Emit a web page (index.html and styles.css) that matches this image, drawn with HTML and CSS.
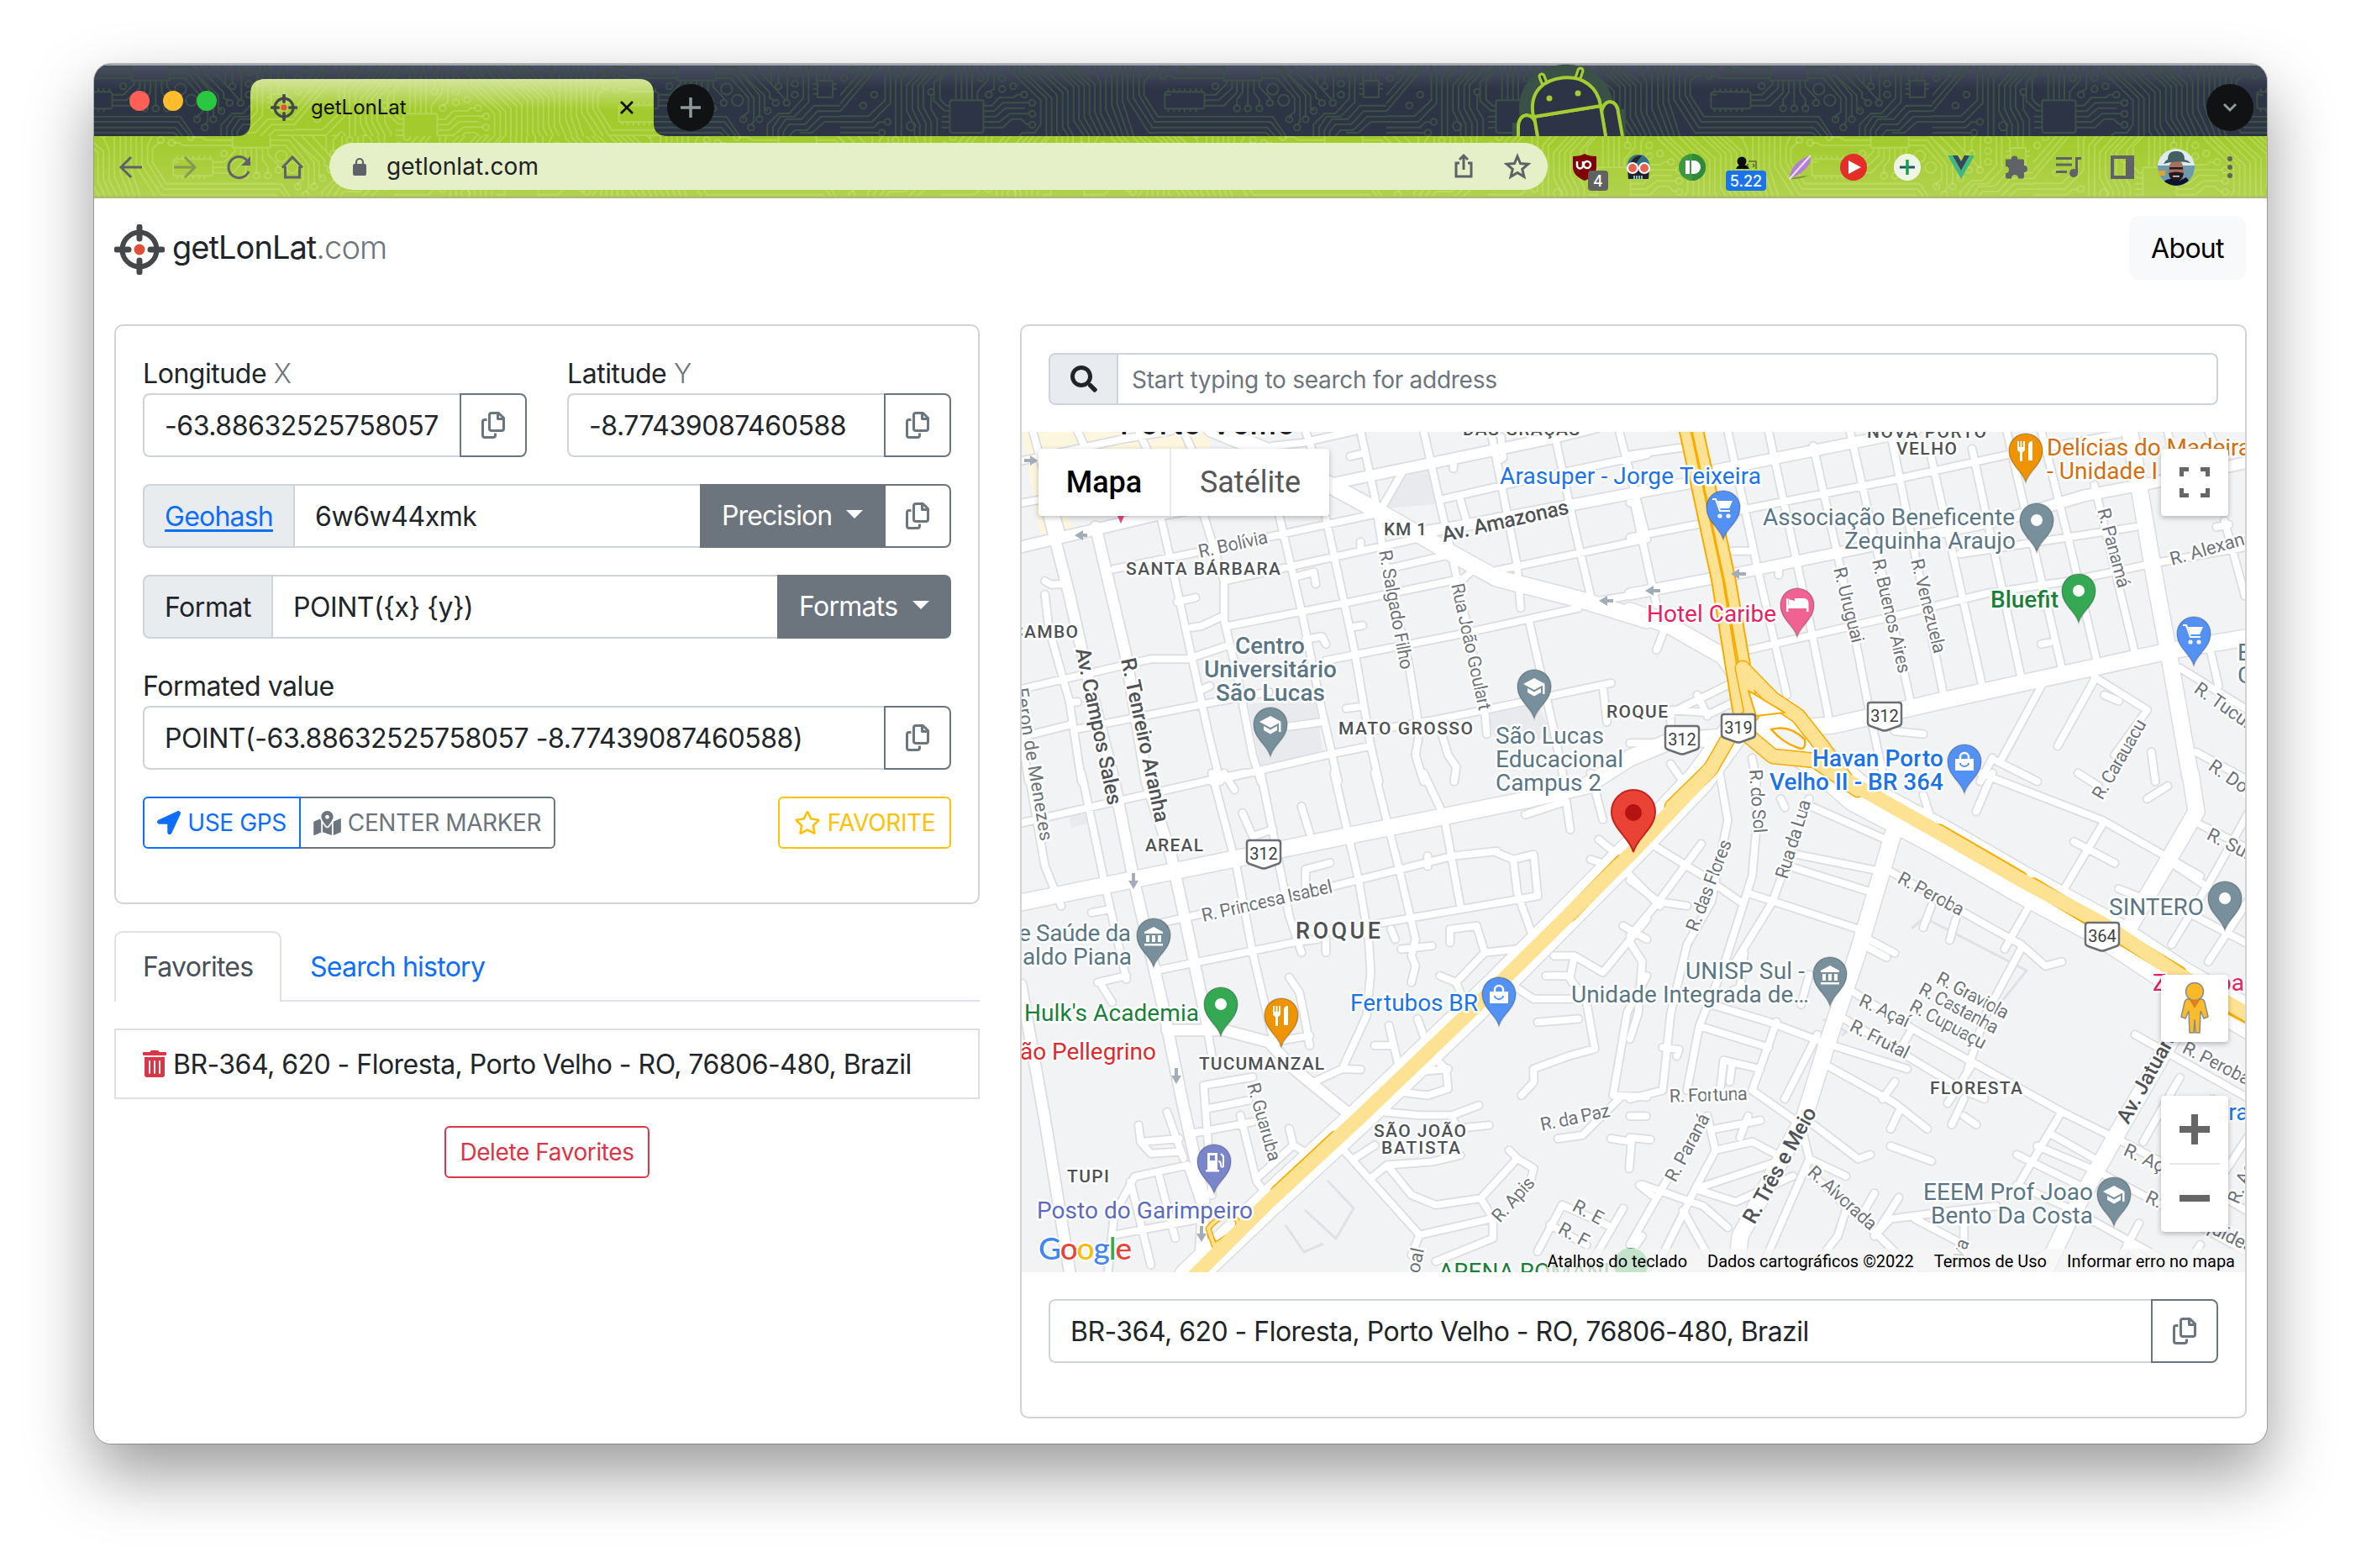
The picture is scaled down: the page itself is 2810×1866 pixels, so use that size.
FILE: index.html
```html
<!DOCTYPE html>
<html lang="en">
<head>
<meta charset="utf-8">
<title>getLonLat</title>
<link rel="stylesheet" href="styles.css">
</head>
<body>
<svg class="sprite" aria-hidden="true">
  <defs>
    <symbol id="i-copy" viewBox="0 0 28 32"><g fill="none" stroke="currentColor" stroke-width="3" stroke-linejoin="round"><path d="M12 1.500h8.500l6 6V20a2.500 2.500 0 0 1-2.500 2.500H12A2.500 2.500 0 0 1 9.500 20V4A2.500 2.500 0 0 1 12 1.500z"/><path d="M19.500 2v6.500h7M6.500 9.500H4A2.500 2.500 0 0 0 1.500 12v16A2.500 2.500 0 0 0 4 30.500h10a2.500 2.500 0 0 0 2.500-2.500v-2.500"/></g></symbol>
    <symbol id="i-target" viewBox="0 0 60 60"><circle cx="30" cy="30" r="20.500" fill="none" stroke="#45484a" stroke-width="6"/><path d="M30 3v14M30 43v14M3 30h14M43 30h14" stroke="#45484a" stroke-width="7" stroke-linecap="round"/><circle cx="30" cy="30" r="6.500" fill="#e04f3a"/></symbol>
    <symbol id="i-search" viewBox="0 0 512 512"><path fill="currentColor" d="M505 442.700L405.300 343c-4.500-4.500-10.600-7-17-7H372c27.600-35.300 44-79.700 44-128C416 93.100 322.900 0 208 0S0 93.100 0 208s93.100 208 208 208c48.300 0 92.700-16.400 128-44v16.300c0 6.400 2.500 12.500 7 17l99.700 99.700c9.400 9.400 24.600 9.400 33.900 0l28.300-28.300c9.400-9.400 9.400-24.600.1-34zM208 336c-70.700 0-128-57.200-128-128 0-70.700 57.200-128 128-128 70.700 0 128 57.200 128 128 0 70.700-57.200 128-128 128z"/></symbol>
    <symbol id="i-arrow" viewBox="0 0 512 512"><path fill="currentColor" d="M444.520 3.520L28.740 195.420c-47.970 22.390-31.980 92.750 19.190 92.750h175.910v175.910c0 51.170 70.360 67.170 92.750 19.190l191.900-415.780c15.990-38.390-25.590-79.970-63.970-63.970z"/></symbol>
    <symbol id="i-map" viewBox="0 0 576 512"><path fill="currentColor" d="M288 0c-69.590 0-126 56.410-126 126 0 56.260 82.350 158.800 113.900 196.020 6.390 7.540 17.820 7.540 24.200 0C331.650 284.800 414 182.260 414 126 414 56.410 357.590 0 288 0zm0 168c-23.200 0-42-18.800-42-42s18.800-42 42-42 42 18.800 42 42-18.800 42-42 42zM20.120 215.950A32.006 32.006 0 0 0 0 245.660v250.320c0 11.320 11.430 19.060 21.940 14.860L160 448V214.920c-8.840-15.980-16.070-31.540-21.250-46.420L20.120 215.950zM288 359.670c-14.070 0-27.380-6.180-36.510-16.960-19.660-23.200-40.570-49.620-59.490-76.720v182l192 64V266c-18.920 27.090-39.820 53.520-59.490 76.720-9.130 10.770-22.440 16.950-36.510 16.950zm266.060-198.510L416 224v288l139.880-55.950A31.996 31.996 0 0 0 576 426.340V176.020c0-11.320-11.430-19.060-21.940-14.860z"/></symbol>
    <symbol id="i-star" viewBox="0 0 576 512"><path fill="currentColor" d="M528.100 171.500L382 150.200 316.700 17.800c-11.700-23.600-45.600-23.900-57.400 0L194 150.200 47.900 171.500c-26.200 3.800-36.700 36.100-17.700 54.600l105.700 103-25 145.500c-4.500 26.300 23.200 46 46.400 33.700L288 439.600l130.700 68.700c23.200 12.200 50.900-7.400 46.400-33.700l-25-145.500 105.700-103c19-18.500 8.500-50.800-17.700-54.600zM388.600 312.300l23.700 138.400L288 385.400l-124.300 65.300 23.700-138.400-100.600-98 139-20.200 62.200-126 62.200 126 139 20.200-100.600 98z"/></symbol>
    <symbol id="i-trash" viewBox="0 0 448 512"><path fill="currentColor" d="M32 464a48 48 0 0 0 48 48h288a48 48 0 0 0 48-48V128H32zm272-256a16 16 0 0 1 32 0v224a16 16 0 0 1-32 0zm-96 0a16 16 0 0 1 32 0v224a16 16 0 0 1-32 0zm-96 0a16 16 0 0 1 32 0v224a16 16 0 0 1-32 0zM432 32H312l-9.400-18.700A24 24 0 0 0 281.100 0H166.800a23.720 23.720 0 0 0-21.400 13.300L136 32H16A16 16 0 0 0 0 48v32a16 16 0 0 0 16 16h416a16 16 0 0 0 16-16V48a16 16 0 0 0-16-16z"/></symbol>

    <!-- one repeat of the circuit board theme -->
    <g id="circuit" transform="scale(.4209 .3333)">
      <path class="hair" d="M0 130L75 22M0 160L95 22M0 188L110 22M0 205H80L127 148V22M0 225H90L142 158V50L150 22M0 245H95L110 226H125M0 264H108M157 276V70L190 22M173 276V70L208 22M210 276V240L188 185V95L240 22M225 276V235L204 180V95L257 22M242 276V230L220 176V95L272 22M257 276V225L235 172V95L290 22M274 276V215L257 180V128M310 185H295L265 150V85L310 22M310 167H300L282 145V75L320 22M327 145V22M343 145V22M358 145V22M373 145V22M388 145V118L418 75V22M397 60V22M420 118L435 108V60L450 22M405 167H428L450 138H490L500 128H512M405 187H435L460 157H535M405 206H440L467 176H522M405 225H450L480 196H535M405 245H460L485 215H512L528 234H536M310 206H287M310 225H287M310 245H287M505 276L515 264H550L567 234V148L483 45V22M583 276V140L499 40V22M598 276V140L515 40V22M622 276L613 260V130L530 22M645 276L629 245V120L547 22M660 276L644 240V115L562 22M690 276L660 220V100L595 22M705 276L675 215V100L612 22M720 276L690 210V95L627 22M735 276L705 200V95L645 22M750 276L720 190V90L660 22M770 276L736 195V85L720 40M785 276L751 180V22M800 276L768 165V22M815 276L783 160V22M830 276L798 150V22M1215 276L1205 264H873L813 145V22M1230 276L1208 245H883L829 140V22M1250 276L1217 225H890L845 130V70L860 30M1260 276L1223 206H898L859 130V80L880 55M918 128H935M900 22L910 30H930L940 22M918 60H935L945 69H1085M970 40H998L1010 50H1085M1005 22L1015 30H1085M1030 128H1062L1092 90V80M1030 148H1070L1108 105V80M1030 167H1085L1122 120V80M1122 170V145L1138 120V80M1153 170V80M1185 170V145L1170 120V80M1215 150V140L1185 100V80M1192 69H1235L1285 140V190L1270 205V215M1192 50H1245L1300 140V225L1292 235M1192 30H1250L1316 130V210M1240 22L1330 130V176L1340 186M1270 22L1345 120V140L1362 150M1300 22L1378 130L1392 150M1335 22L1350 40V90M1370 90V50L1378 40V22M1395 22V148M1440 22V140L1400 195H1370L1338 235V276M1455 22V155L1415 206H1375L1354 245V276M1544 167H1470L1435 215H1390L1369 255V276M1544 187H1480L1445 234H1400L1384 260V276M1544 206H1490L1450 255H1415L1400 276M1544 225H1500L1465 264H1430M1500 80V50L1490 22M1515 80V22M1478 90V50L1465 22M310 148H400Q405 148 405 155V256Q405 264 398 264H318Q310 264 310 256V155Q310 148 318 148M1085 22V77H1192V22M925 118H1022Q1030 118 1030 126V170Q1030 178 1022 178H925Q918 178 918 170V126Q918 118 925 118M928 118V106M944 118V106M959 118V106M974 118V106M990 118V106M1006 118V106M1022 118V106M928 178V190M944 178V190M959 178V190M974 178V190M990 178V190M1006 178V190M1480 78H1523V137H1480ZM1480 90H1467M1480 107H1467M1480 125H1467M1523 90H1535M1523 107H1535"/>
      <g><ellipse class="hair" cx="11" cy="69" rx="9" ry="11"/><ellipse class="hair" cx="34" cy="40" rx="9" ry="11"/><ellipse class="hair" cx="96" cy="128" rx="9" ry="11"/><ellipse class="hair" cx="65" cy="167" rx="9" ry="11"/><ellipse class="hair" cx="134" cy="225" rx="9" ry="11"/><ellipse class="hair" cx="118" cy="264" rx="9" ry="11"/><ellipse class="hair" cx="200" cy="240" rx="12" ry="16"/><ellipse class="hair" cx="257" cy="118" rx="9" ry="11"/><ellipse class="hair" cx="397" cy="69" rx="9" ry="11"/><ellipse class="hair" cx="420" cy="128" rx="9" ry="11"/><ellipse class="hair" cx="458" cy="69" rx="9" ry="11"/><ellipse class="hair" cx="458" cy="108" rx="9" ry="11"/><ellipse class="hair" cx="489" cy="98" rx="9" ry="11"/><ellipse class="hair" cx="520" cy="128" rx="9" ry="11"/><ellipse class="hair" cx="543" cy="157" rx="9" ry="11"/><ellipse class="hair" cx="543" cy="196" rx="9" ry="11"/><ellipse class="hair" cx="543" cy="235" rx="9" ry="11"/><ellipse class="hair" cx="720" cy="30" rx="9" ry="11"/><ellipse class="hair" cx="882" cy="50" rx="9" ry="11"/><ellipse class="hair" cx="913" cy="60" rx="9" ry="11"/><ellipse class="hair" cx="967" cy="40" rx="9" ry="11"/><ellipse class="hair" cx="1061" cy="98" rx="9" ry="11"/><ellipse class="hair" cx="1122" cy="177" rx="9" ry="11"/><ellipse class="hair" cx="1153" cy="177" rx="9" ry="11"/><ellipse class="hair" cx="1185" cy="177" rx="9" ry="11"/><ellipse class="hair" cx="1215" cy="157" rx="9" ry="11"/><ellipse class="hair" cx="1223" cy="108" rx="16" ry="20"/><ellipse class="hair" cx="1254" cy="148" rx="16" ry="20"/><ellipse class="hair" cx="1270" cy="216" rx="9" ry="11"/><ellipse class="hair" cx="1292" cy="245" rx="9" ry="11"/><ellipse class="hair" cx="1316" cy="216" rx="9" ry="11"/><ellipse class="hair" cx="1339" cy="186" rx="9" ry="11"/><ellipse class="hair" cx="1362" cy="157" rx="9" ry="11"/><ellipse class="hair" cx="1393" cy="157" rx="9" ry="11"/><ellipse class="hair" cx="1370" cy="98" rx="9" ry="11"/><ellipse class="hair" cx="1416" cy="50" rx="9" ry="11"/><ellipse class="hair" cx="1416" cy="89" rx="9" ry="11"/><ellipse class="hair" cx="1416" cy="128" rx="9" ry="11"/></g>
    </g>

    <!-- map pins: the tip is at 0,0 -->
    <g id="pin"><path d="M0 0C-4-14-20-21-20-38A20 20 0 0 1 20-38C20-21 4-14 0 0z" stroke="rgba(0,0,0,.22)" stroke-width="1.500"/></g>
    <g id="g-dot"><circle cy="-38" r="7" fill="#fff"/></g>
    <g id="g-cart" fill="none" stroke="#fff" stroke-width="2.200"><path d="M-13-48h4l5 14h12"/><path d="M-7-46h18l-4 9h-11z" fill="#fff" stroke="none"/><circle cx="-4" cy="-28" r="1.500"/><circle cx="6" cy="-28" r="1.500"/></g>
    <g id="g-bag"><path d="M-11-41h22v14h-22z" fill="#fff"/><path d="M-5-40v-3a5 5 0 0 1 10 0v3" fill="none" stroke="#fff" stroke-width="2.500"/><path d="M-5-36a5 4 0 0 0 10 0" fill="none" stroke="#5491f5" stroke-width="2"/></g>
    <g id="g-school" fill="#fff"><path d="M-13-41l13-7 13 7-13 7z"/><path d="M-8-36l8 4.500 8-4.500v5l-8 4.500-8-4.500zM10-40h2.500v11H10z"/></g>
    <g id="g-bank" fill="#fff"><path d="M-11-42l11-6 11 6v2h-22zM-9-38h4v8h-4zM-2-38h4v8h-4zM5-38h4v8h-4zM-11-28h22v2.500h-22z"/></g>
    <g id="g-food" fill="#fff"><path d="M-10-49h2v7h1.500v-7h2v7H-3v-7h2v9q0 3-3 4v11h-3v-11q-3-1-3-4zM3-26v-18q0-5 5-5v23H5v-9H6v9z"/></g>
    <g id="g-bed" fill="#fff"><path d="M-13-46h2.500v11H11v-4q0-5-5-5h-8v7h-9v3h22v4h2.500V-40q0-6-6-6H-3v8h-8v-8zM-13-46v16h2.500v-4H11v-4z"/><circle cx="-7" cy="-41" r="3"/></g>
    <g id="g-fuel"><path d="M-8-48h12v20h2v2.500h-16V-28h2z" fill="#fff"/><path d="M-5-45h6v6h-6z" fill="#7986cb"/><path d="M5-38q3 0 3 4t3 2v-12l-3-3" fill="none" stroke="#fff" stroke-width="2"/></g>
    <path id="shield" d="M-17-16h34q3 0 3 3V8q0 3-3 4L3 17q-3 1-6 0L-17 12q-3-1-3-4V-13q0-3 3-3z" fill="#fff" stroke="#6b6f73" stroke-width="2.500"/>

    <!-- streets, one group per map quarter -->
    <g id="minor">
      <g transform="translate(1200 370) scale(.4847 .3571)"><path class="hair" d="M60 400L100 600 130 740M170 400L190 460M320 400L340 460M430 400L450 460M375 690L410 900 450 1150 490 1400 520 1568M480 680L530 900V1030L560 1200 600 1480 620 1568M665 680L720 1000 770 1330 810 1568M730 400L745 460M780 690L850 1130 890 1450 910 1568M865 400L900 620 920 800 985 1190 1010 1400 1000 1480 1020 1568M1020 400L1070 700 1095 850 1170 1330 1175 1410M1060 1390L1080 1480 1100 1520 1095 1568M1185 400L1250 850 1258 990M1340 400L1390 720 1430 950M1500 400L1568 760M1280 1040L1340 1400 1365 1568M1460 1250L1470 1370M32 500L270 430 400 400M32 640L75 630M260 860L480 800 890 680M530 900L800 820 1000 760M540 1050L840 970 1120 890 1140 865M930 860L1090 810M440 1160L540 1115M32 1260L350 1160H440M780 1165L1100 1080 1400 990M165 1395L480 1310 640 1270M32 1420L150 1380M500 1568L780 1480 890 1450M690 1385L770 1370M890 1400L1060 1360 1170 1330 1480 1240M650 450L720 440 850 400M1060 630L1220 580 1390 530 1568 480M1200 865L1568 760M830 1325L870 1318M840 1055L870 1048M730 1095L770 1085 780 1110M450 1055L475 1050 530 1015M415 970L460 955M90 900L105 912 135 910M90 945L100 1060 150 1300 180 1568M150 1305L170 1303M470 1265L495 1250M840 485L870 475M1093 490V525M1210 420L1215 490 1200 500M975 520L920 650M865 770V800M710 885L750 870 755 910M1110 630L1125 700M20 1300L50 1568M1568 940L1430 970"/></g>
      <g transform="translate(1940 370) scale(.4847 .3571)"><path class="hair" d="M240 400L320 900 385 1280M340 400L440 1030 490 1370M450 450L540 1000 590 1350 625 1568M540 400L640 1000 690 1310M640 410L770 1280M740 490L865 1250M840 460L960 1220M925 400L1060 1190M1010 400L1080 780 1145 1160M1140 580L1240 1140M1320 400L1350 600M1420 400L1450 500M1460 700L1510 950M1425 1130L1445 1250M0 640H10L65 980M0 480L130 455M0 755L190 705M250 670L640 565 925 480 1200 410M250 800H300M290 1130L640 1020 880 940 1080 900 1290 840 1540 780M810 810L1000 770 1240 720M100 1400V1340L250 1240M100 1330L200 1340 260 1300M165 1280L190 1350M85 1060L65 1130M1010 1250L910 1500M1140 1230L1050 1450M1140 1220L1270 1330 1190 1480M1350 1190L1540 1350M1390 1470L1540 1580M890 1490L860 1568M900 1500L1000 1568M650 1400L720 1410M1010 1110L1030 1105M1440 720L1470 712M1280 1470L1290 1568M1165 1280L1200 1300M300 1490L310 1568M0 1440L60 1440M365 860V880M100 1510L130 1568"/></g>
      <g transform="translate(1200 920) scale(.4847 .3954)"><path class="hair" d="M180 0L240 350 290 620M500 0L560 280 600 540 650 800M50 0L90 280 130 400M530 0L555 50M620 0L650 180 690 430 720 540M800 0L860 320 885 500 890 600 880 730 820 890M900 0L960 290 1000 500M1020 0L1070 130 1110 400M490 780L500 850M720 100L740 180M575 120L600 190 650 170M730 340V290L790 270M32 150L500 20 580 0M380 450L470 425M800 340L1090 250 1200 235M1200 240L1240 260 1290 245 1300 370 900 455M360 595L700 510 760 500M780 500V540M1240 260L1250 360 1290 500M1085 510V470L1150 460 1170 540 1250 530M1170 540L1100 630 1060 610M1100 630L1120 690M1000 500L990 550 1000 580 990 630M965 530L1040 520M690 615L715 660 730 750 740 820M650 810L740 790M820 890L750 930M820 890L865 892M220 630L290 610M230 640L255 690M205 420L250 410M320 1060L325 1110 420 1100M325 1110L350 1145 420 1140M390 1020L430 1160M480 940L600 915M480 940L500 1270M490 1010L590 985M450 1085L600 1050M570 1030L610 1230 630 1260M690 1070L700 1120 610 1220M700 1120L740 1150M440 1180L310 1215 260 1330 245 1500M300 1230L350 1480M260 1390L480 1340M370 1210L410 1400M440 1180L470 1290M820 1130L1010 1390 990 1450M1010 1390L1190 1340 1160 1280M930 1180L990 1270 1050 1300 1160 1280 1250 1160 1290 1190 1280 1240M890 1220L930 1180 1040 1170 1110 1150M850 1160L900 1120M1250 1160L1230 1135M1190 1340V1400L1050 1470M920 1020L1010 1030H1090L1155 1000M1090 1030L1100 1070 1180 1060M960 960L1030 970 1080 950 1075 890 1040 850M1080 890L1000 900M900 820H940M935 760L960 890M1005 740L1020 790M1240 640L1290 680H1400M1300 750L1400 740M1320 610H1380L1390 550H1340M1390 550L1460 600 1568 440M1380 620L1420 690 1440 830 1380 850 1290 890V930L1260 970M1510 460L1568 500M1568 610L1520 720 1485 970 1568 975M1500 980L1410 1090 1350 1100M1480 1100L1530 1110 1525 1190M1300 1440L1360 1300 1470 1360M1330 1360L1420 1420M1510 1310L1420 1500M1270 125L1370 85 1380 170M1450 200L1490 240M1430 260L1480 280M1030 250V280M940 470L950 500M1520 300L1600 400M1550 1240L1580 1270M1430 0L1460 140"/></g>
      <g transform="translate(1940 920) scale(.4847 .5102)"><path class="hair" d="M220 0L240 110 200 300 140 400 100 560 80 740 0 760M310 0V130L300 240 230 450 170 590 140 740M440 60L350 300 240 470M60 170L180 240 270 300M0 250L70 300 140 310M70 300L0 380M0 395L30 440 20 560 0 620M70 300L175 165M450 80L640 160M410 190L620 230M400 220L600 280M290 280L580 370M370 60L380 80M720 50L740 110M850 90L890 0M570 380L650 420M570 400L630 430M200 540L340 580 480 630 680 690M170 590L340 640M360 580L300 740M460 610L380 760M230 670L320 690M220 750L230 670M250 680L245 720M300 740L420 820 440 900 530 940M530 500L700 600 1060 790 1210 860 1330 920 1568 1050M520 570L680 660 820 740 870 760M690 600L660 650M480 680L650 770 730 830M650 720L620 760M660 790L640 830M640 870L740 905M840 680L780 770M820 760L790 820M820 800L850 820M450 820L560 900 590 890M640 230L960 400 1020 450 1060 440M740 310L720 360M800 340L785 390M980 310L920 410M960 410L870 570 830 690M860 0L1160 110 1400 240M1160 120L1060 280M1090 160L1190 210M1400 120L1568 200M1330 210L1440 280M1380 330L1540 410M1520 90L1420 260 1330 400M1530 280L1420 440M1240 610L1540 770M1060 790L960 950M1030 840L1160 910M950 890L1100 960M1000 870L1150 930 1290 1000 1540 1130M950 960L1090 1020 1300 1130M1350 710L1260 860M1430 760L1340 900M1530 830L1440 960M600 1080L640 1040 800 1020 900 1010M440 930L600 1070 700 1163M600 980L570 1030M660 990L600 1080M530 1020L510 1080 460 1140M700 1040L820 1100M190 800L210 880 160 970 60 1163M210 880L300 860 360 890M160 970L350 910M160 970L260 1000 400 940M30 960L180 1010 240 1060M90 950L0 1100M130 1020L200 1140M440 900L330 1140M210 830L320 810M290 800L270 850M0 800H40M0 850L50 855M80 640L120 645 115 660M280 420L270 500 200 530M440 470L420 540M1250 1050L1210 1120M820 1020V1120M940 1163L1060 1100M1220 1100L1300 1163M1360 1163L1400 1100M30 1080L-30 1163M1200 270L1280 300M1150 30L1100 0M1270 60L1320 30"/></g>
    </g>
    <g id="medium">
      <path class="hair" d="M1215 651L1380 612 1588 575 1714 549 1840 523 1900 508M1685 634L1733 627 1960 584 2010 575 2035 561 2250 518 2280 511M1215 1172L1244 1335 1273 1513M1940 707L2045 687 2250 645 2390 617 2480 590 2560 575 2680 549M1389 1226H1457L1510 1240 1540 1272 1607 1327"/>
      <path class="hair" d="M1248 612L1273 709 1297 816 1326 930 1350 1050 1384 1197 1408 1315 1433 1426 1428 1513M1304 627L1340 780 1365 930 1394 1019 1413 1106 1437 1220"/>
    </g>
    <g id="major">
      <path class="hair" d="M1442 510L1510 538 1636 606 1685 634 1723 656 1781 688 1879 713 1960 738M1940 727L1988 745 2051 781 2071 809"/>
      <path class="hair" d="M1215 1074L1602 995 1816 952 1888 935 1940 902 1988 882 2052 877M2110 868L2182 863 2342 827 2585 774 2690 756M2534 510L2565 691 2585 799 2607 925M2607 920L2614 966 2531 1109M2594 1220L2517 1354 2463 1451 2430 1520M2255 986L2211 1134 2173 1247 2148 1328 2071 1471 2066 1520"/>
    </g>
    <path id="br364" d="M2108 866L2165 905 2211 945 2308 996 2405 1052 2502 1104 2594 1165 2690 1221"/>
    <path id="br364w" d="M2060 876L2022 928 1944 1010 1782 1173 1617 1331 1510 1430 1415 1520"/>
  </defs>
</svg>

<main class="window">
  <svg class="theme" viewBox="112 76 2586 160" aria-hidden="true">
    <defs>
      <linearGradient id="strip" x1="0" y1="0" x2="0" y2="1"><stop offset="0" stop-color="#4c5263"/><stop offset=".35" stop-color="#2d3446"/></linearGradient>
      <linearGradient id="bar" gradientUnits="userSpaceOnUse" x1="0" y1="162" x2="0" y2="236"><stop offset="0" stop-color="#a2cb2c"/><stop offset="1" stop-color="#b1d24f"/></linearGradient>
      <linearGradient id="tab" gradientUnits="userSpaceOnUse" x1="0" y1="94" x2="0" y2="130"><stop offset="0" stop-color="#d3e59d"/><stop offset="1" stop-color="#a3cb2e"/></linearGradient>
      <clipPath id="tabclip"><path d="M282 162q16 0 16-16V112q0-18 18-18H760q18 0 18 18v34q0 16 16 16z"/></clipPath>
      <clipPath id="barclip"><path d="M112 162H2698V236H112z"/></clipPath>
      <clipPath id="stripclip"><path d="M112 76H2698V162H112z"/></clipPath>
    </defs>
    <rect x="112" y="76" width="2586" height="86" fill="url(#strip)"/>
    <g clip-path="url(#stripclip)" class="lines-dark">
      <use href="#circuit" transform="translate(-300 70)"/><use href="#circuit" transform="translate(350 70)"/><use href="#circuit" transform="translate(1000 70)"/><use href="#circuit" transform="translate(1650 70)"/><use href="#circuit" transform="translate(2300 70)"/>
    </g>
    <rect x="112" y="76" width="2586" height="2" fill="#a4a7ae"/>
    <g class="droid">
      <path d="M1824 140C1818 108 1838 94 1860 92C1884 90 1902 104 1905 125L1911 162H1830ZM1836 90L1842 104M1880 83L1876 98M1815 162V146M1920 162V130" stroke="#3b5047" stroke-width="30" fill="#3b5047" stroke-linejoin="round"/>
      <path d="M1807 162V150Q1808 138 1817 137 1827 138 1828 150L1830 162M1911 162L1906 134Q1908 122 1916 121 1925 122 1926 134L1931 162" fill="#2d3446" stroke="#a4cd32" stroke-width="4"/>
      <path d="M1835 91L1841 106M1881 84L1876 99" stroke="#a4cd32" stroke-width="9" stroke-linecap="round"/>
      <path d="M1835 91L1841 106M1881 84L1876 99" stroke="#2d3446" stroke-width="2.500" stroke-linecap="round"/>
      <path d="M1830 162L1826 139 1905 126 1911 162" fill="#2d3446" stroke="#a4cd32" stroke-width="4"/>
      <path d="M1825 139C1819 108 1838 95 1860 92.500C1884 90 1902 104 1905 126Z" fill="#2d3446" stroke="#a4cd32" stroke-width="4"/>
      <circle cx="1844" cy="117" r="3.500" fill="#a4cd32"/><circle cx="1878" cy="111" r="3.500" fill="#a4cd32"/>
    </g>
    <rect x="112" y="162" width="2586" height="74" fill="url(#bar)"/>
    <path d="M282 162q16 0 16-16V112q0-18 18-18H760q18 0 18 18v34q0 16 16 16z" fill="url(#tab)"/>
    <g clip-path="url(#tabclip)" class="lines-green"><use href="#circuit" transform="translate(350 86)"/><use href="#circuit" transform="translate(-300 86)"/></g>
    <g clip-path="url(#barclip)" class="lines-green">
      <use href="#circuit" transform="translate(-180 150)"/><use href="#circuit" transform="translate(470 150)"/><use href="#circuit" transform="translate(1120 150)"/><use href="#circuit" transform="translate(1770 150)"/><use href="#circuit" transform="translate(2420 150)"/>
    </g>
    <rect x="112" y="233.500" width="2586" height="2.500" fill="#adbb78"/>
  </svg>

  <div class="tabstrip">
    <span class="light red"></span><span class="light amber"></span><span class="light green"></span>
    <div class="tab"><svg class="fav"><use href="#i-target"/></svg><span class="tab-title">getLonLat</span>
      <svg class="x" viewBox="0 0 18 18"><path d="M2 2l14 14M16 2L2 16" stroke="#111" stroke-width="2.800"/></svg></div>
    <span class="round plus"><svg width="26" height="26" viewBox="0 0 26 26"><path d="M13 1v24M1 13h24" stroke="#8e9a9b" stroke-width="3.500"/></svg></span>
    <span class="round chev"><svg width="18" height="12" viewBox="0 0 18 12"><path d="M2 2l7 7 7-7" fill="none" stroke="#8e9a9b" stroke-width="3"/></svg></span>
  </div>

  <div class="toolbar">
    <svg class="nav" viewBox="0 0 32 32"><path d="M29 16H4M16 4L4 16l12 12"/></svg>
    <svg class="nav dim" viewBox="0 0 32 32"><path d="M3 16h25M16 4l12 12-12 12"/></svg>
    <svg class="nav" viewBox="0 0 32 32"><path d="M28 21A12.500 12.500 0 1 1 26 8"/><path d="M30 3v11H19z" fill="#5f6368" stroke="none"/></svg>
    <svg class="nav" viewBox="0 0 32 32"><path d="M4 16.500L16 4l12 12.500M7.500 15v13h17V15"/></svg>
    <div class="omnibox">
      <svg class="lock" viewBox="0 0 18 22"><path d="M5 9V6a4 4 0 0 1 8 0v3" fill="none" stroke="#5f6368" stroke-width="2.200"/><rect x="1" y="8" width="16" height="14" rx="2" fill="#5f6368"/></svg>
      <span class="url">getlonlat.com</span>
      <svg class="nav share" viewBox="0 0 32 32"><path d="M11 12H7v16h18V12h-4M16 20V4M11 8l5-5 5 5"/></svg>
      <svg class="nav star" viewBox="0 0 32 32"><path d="M16 4l3.500 8.500 9.200.8-7 6 2.200 9L16 23.400l-7.900 4.900 2.200-9-7-6 9.200-.8z"/></svg>
    </div>
    <div class="exts">
      <svg class="ext" viewBox="-32 -37 64 74"><path d="M-14-13Q-5-13 0-16 5-13 14-13V0Q14 10 0 16-14 10-14 0z" fill="#800000"/><path d="M-9-7v5a3.500 3.500 0 0 0 7 0v-5M-2-2v-5M3-7a4 4 0 1 1 0 8 4 4 0 1 1 0-8" fill="none" stroke="#fff" stroke-width="2.500"/><rect x="4" y="4" width="24" height="24" rx="4" fill="#616161"/><text x="16" y="23" class="badge">4</text></svg>
      <svg class="ext" viewBox="-32 -37 64 74"><path d="M-14 2Q-13-15 0-15T14 2z" fill="#336f85"/><path d="M-10-5Q-4-15 4-14L-4-3z" fill="#24232e"/><path d="M-13 2h26l-1 12h-24z" fill="#23222c"/><circle cx="-7" cy="1" r="6" fill="#e8604c" stroke="#fff" stroke-width="2.200"/><circle cx="7" cy="1" r="6" fill="#e8604c" stroke="#fff" stroke-width="2.200"/><path d="M-5 10v4M-2 10v4M1 10v4M4 10v4" stroke="#9fe0ee" stroke-width="1.600"/></svg>
      <svg class="ext" viewBox="-32 -37 64 74"><circle r="16" fill="#3f9840"/><path d="M0-16A16 16 0 0 1 0 16z" fill="#2f8a3a"/><path d="M-8-8h5V8h-5zM-1-8h3a8 8 0 0 1 0 16h-3z" fill="#fff"/></svg>
      <svg class="ext" viewBox="-32 -37 64 74"><circle cx="-5" cy="-7" r="5.500" fill="#0c0c0c"/><path d="M-12 2q2-5 8-5t8 5z" fill="#0c0c0c"/><path d="M3-7h9v9" fill="none" stroke="#5c6b2d" stroke-width="1.500"/><path d="M3-4l-2 2 2 2M8-4l2 2-2 2" fill="none" stroke="#4c5a25" stroke-width="1.200"/><rect x="-24" y="4" width="48" height="24" rx="4" fill="#1a73e8"/><text x="0" y="23" class="badge">5.22</text></svg>
      <svg class="ext" viewBox="-32 -37 64 74"><path d="M-10 13q8-2 20-3-8 4-20 4z" fill="#7c9430"/><path d="M-12 14Q-12 2-2-6T13-14Q14-4 6 3T-12 14" fill="#b57fd6"/><path d="M-12 14Q-2 2 13-14" fill="none" stroke="#efe4fa" stroke-width="2"/></svg>
      <svg class="ext" viewBox="-32 -37 64 74"><circle r="16" fill="#e32f27"/><path d="M-6-8L9 0-6 8z" fill="#fff"/></svg>
      <svg class="ext" viewBox="-32 -37 64 74"><circle r="16" fill="#eef5e6"/><path d="M-9 0H9" stroke="#175b6b" stroke-width="3"/><path d="M0-9V9" stroke="#17a049" stroke-width="3.500"/></svg>
      <svg class="ext" viewBox="-32 -37 64 74"><path d="M-16-14h6L0 4l10-18h6L0 14z" fill="#41b883"/><path d="M-10-14h6L0-7l4-7h6L0 4z" fill="#34495e"/></svg>
      <svg class="ext" viewBox="-32 -37 64 74"><path d="M-11-9.500h6.500a4 4 0 1 1 8 0H9q2 0 2 2V-2a4 4 0 1 1 0 8v5.500q0 2-2 2H4q0-4.500-4-4.500T-4 13.500h-5q-2 0-2-2V7q4 0 4-4t-4-4z" fill="#5f6368"/></svg>
      <svg class="ext" viewBox="-32 -37 64 74"><path d="M-15-10.500H4M-15-3H4M-15 5.500H-2M15-10.500H9.500V7" fill="none" stroke="#5f6368" stroke-width="3"/><circle cx="6" cy="7" r="5" fill="#5f6368"/></svg>
      <svg class="ext" viewBox="-32 -37 64 74"><path d="M-14-14h28v28h-28zM-10-10v20H4v-20z" fill="#5f6368" fill-rule="evenodd"/></svg>
      <svg class="ext" viewBox="-32 -37 64 74"><defs><clipPath id="face"><circle r="22"/></clipPath></defs><g clip-path="url(#face)"><rect x="-22" y="-22" width="44" height="44" fill="#dfeaf0"/><path d="M-22-2h44v24h-44z" fill="#6d9aac"/><path d="M-22 4h9v6h-9z" fill="#d9a92c"/><ellipse cx="0" cy="3" rx="9" ry="12" fill="#a9705f"/><path d="M-9 7Q0 4 9 7 8 16 0 17-8 16-9 7" fill="#251a22"/><path d="M-4 10h8v1.500h-8z" fill="#e6dcd8"/><path d="M-8 0h16v2.500H-8z" fill="#1d1b24"/><path d="M-15-4Q-12-9-10-9-10-20 0-19 10-20 10-9 15-8 17-5 0-9-15-4" fill="#41605f"/><path d="M-18 22Q-14 13-5 14L4 16 12 12 20 22z" fill="#0d1230"/></g></svg>
      <svg class="ext" viewBox="-32 -37 64 74"><g fill="#5f6368"><circle cy="-10" r="3"/><circle r="3"/><circle cy="10" r="3"/></g></svg>
    </div>
  </div>

  <header class="site">
    <a class="brand"><svg class="logo"><use href="#i-target"/></svg><span class="brand-name">getLonLat</span><span class="brand-tld">.com</span></a>
    <a class="about">About</a>
  </header>

  <div class="columns">
    <section class="left">
      <div class="card form">
        <div class="pair">
          <div><label>Longitude <span class="muted">X</span></label>
            <div class="group"><span class="field">-63.88632525758057</span><span class="copy"><svg><use href="#i-copy"/></svg></span></div></div>
          <div><label>Latitude <span class="muted">Y</span></label>
            <div class="group"><span class="field">-8.77439087460588</span><span class="copy"><svg><use href="#i-copy"/></svg></span></div></div>
        </div>
        <div class="group gap"><span class="addon geo"><a>Geohash</a></span><span class="field mid">6w6w44xmk</span><span class="drop prec">Precision<i></i></span><span class="copy"><svg><use href="#i-copy"/></svg></span></div>
        <div class="group gap"><span class="addon fmt">Format</span><span class="field mid">POINT({x} {y})</span><span class="drop last">Formats<i></i></span></div>
        <label class="gap">Formated value</label>
        <div class="group"><span class="field">POINT(-63.88632525758057 -8.77439087460588)</span><span class="copy"><svg><use href="#i-copy"/></svg></span></div>
        <div class="actions gap">
          <span class="btn gps"><svg width="28" height="28"><use href="#i-arrow"/></svg>USE GPS</span><span class="btn center"><svg width="33" height="29"><use href="#i-map"/></svg>CENTER MARKER</span>
          <span class="btn favorite"><svg width="32" height="28"><use href="#i-star"/></svg>FAVORITE</span>
        </div>
      </div>
      <div class="tabs"><span class="on">Favorites</span><span class="off">Search history</span></div>
      <div class="item"><svg width="28" height="32"><use href="#i-trash"/></svg>BR-364, 620 - Floresta, Porto Velho - RO, 76806-480, Brazil</div>
      <div class="btn delete">Delete Favorites</div>
    </section>

    <section class="card right">
      <div class="group search"><span class="addon"><svg width="32" height="32"><use href="#i-search"/></svg></span><span class="field mid endcap">Start typing to search for address</span></div>
      <div class="map">
        <svg class="tiles" viewBox="1216 514 1456 1000">
          <rect x="1216" y="514" width="1456" height="1000" fill="#f1f3f5"/>
          <path d="M1216 514H1442L1440 534 1236 560 1280 630 1238 636z" fill="#fdf6df"/>
          <g fill="#e8eaee"><path d="M1486 838L1565 830 1575 900 1500 912zM1770 850L1830 838 1850 880 1780 880zM1665 555L1700 548 1708 600 1650 605zM1272 972L1294 968V980L1275 985z"/></g>
          <path d="M1553 1440L1590 1474 1611 1438 1580 1405M1530 1458L1552 1490 1575 1480M2275 1105L2290 1092 2412 1155 2380 1195M2170 1213L2198 1228 2192 1232" fill="none" stroke="#dfe1e5" stroke-width="3"/>
          <g fill="none" stroke-linejoin="round" stroke-linecap="round">
            <g stroke="#dbdde1"><use href="#minor" stroke-width="11.500"/><use href="#medium" stroke-width="16"/><use href="#major" stroke-width="22"/><use href="#br364" stroke-width="46"/><use href="#br364w" stroke-width="38"/></g>
            <g stroke="#fff"><use href="#minor" stroke-width="8"/><use href="#medium" stroke-width="12.500"/><use href="#major" stroke-width="19"/><use href="#br364" stroke-width="43"/><use href="#br364w" stroke-width="35"/></g>
            <g stroke-linecap="butt"><path d="M2005 510L2044 691 2070 852M2020 510L2059 691 2076 790 2072 850" stroke="#f9ab00" stroke-width="15.500"/><path d="M2005 510L2044 691 2070 852M2020 510L2059 691 2076 790 2072 850" stroke="#fde293" stroke-width="11.500"/></g>
            <path d="M2074 795L2085 850 2062 870 2036 915 1990 960M2074 795L2110 832 2140 852 2170 890 2200 932M2062 860L2110 900 2160 905 2211 940" stroke="#f9ab00" stroke-width="19"/>
            <path d="M2308 989L2405 1045M2420 1053L2594 1158M2651 1197L2690 1218M1868 1089L1930 1025M1520 1419L1590 1354" stroke="#f9ab00" stroke-width="17.500"/>
            <path d="M1438 1462Q1456 1440 1470 1450T1445 1482zM1440 1470L1452 1492" stroke="#f9ab00" stroke-width="7"/>
            <path d="M2074 795L2085 850 2062 870 2036 915 1990 960M2074 795L2110 832 2140 852 2170 890 2200 932M2062 860L2110 900 2160 905 2211 940" stroke="#fde293" stroke-width="16"/>
            <path d="M2200 930L2308 991 2405 1047 2502 1099 2594 1160 2690 1216M2036 915L1944 1013 1782 1173 1617 1331 1510 1430 1420 1520" stroke="#fde293" stroke-width="17"/>
            <path d="M1438 1462Q1456 1440 1470 1450T1445 1482z" stroke="#fde293" stroke-width="4"/>
            <path d="M2081 822L2090 852 2124 848z" fill="#fff" stroke="#f9ab00" stroke-width="2"/>
            <path d="M2108 868Q2130 862 2148 880 2150 894 2140 890 2122 884 2108 868z" fill="#f1f3f5" stroke="#f9ab00" stroke-width="2.500"/>
          </g>
          <g fill="#a3acb8"><path d="M1279 637l10-6v4h5v4h-5v4zM1903 715l10-6v4h7v4h-7v4zM2060 683l10-6v4h8v4h-8v4zM1958 703l10-6v4h8v4h-8v4zM1235 548l-9-6v4h-7v4h7v4zM1349 1058l-6-10h4v-9h4v9h4zM1400 1290l-6-10h4v-9h4v9h4zM1430 1478l-6-10h4v-9h4v9h4z"/></g>

          <g class="lbl street">
            <text transform="translate(1428 664) rotate(-12.500)" textLength="84">R. Bolívia</text>
            <text transform="translate(1641 656) rotate(79.500)" textLength="144">R. Salgado Filho</text>
            <text transform="translate(1727 696) rotate(77.500)" textLength="154">Rua João Goulart</text>
            <text transform="translate(1208 820) rotate(80.500)" textLength="184">Feron de Menezes</text>
            <text transform="translate(1432 1097) rotate(-12.800)" textLength="159">R. Princesa Isabel</text>
            <text transform="translate(1484 1291) rotate(74)" textLength="96">R. Guaruba</text>
            <text transform="translate(1835 1346) rotate(-12)" textLength="84">R. da Paz</text>
            <text transform="translate(1785 1456) rotate(-48)" textLength="64">R. Apis</text>
            <text transform="translate(1870 1440) rotate(28)" textLength="38">R. E</text>
            <text transform="translate(1853 1467) rotate(28)" textLength="38">R. F</text>
            <text transform="translate(1689 1516) rotate(-78)">oal</text>
            <text transform="translate(2182 677) rotate(76)" textLength="92">R. Uruguai</text>
            <text transform="translate(2228 667) rotate(76.800)" textLength="139">R. Buenos Aires</text>
            <text transform="translate(2274 667) rotate(76)" textLength="115">R. Venezuela</text>
            <text transform="translate(2496 607) rotate(75)" textLength="97">R. Panamá</text>
            <text transform="translate(2585 673) rotate(-16)">R. Alexandre</text>
            <text transform="translate(2610 823) rotate(35)">R. Tucuruí</text>
            <text transform="translate(2627 915) rotate(35)">R. Dourado</text>
            <text transform="translate(2502 953) rotate(-60)" textLength="106">R. Carauacu</text>
            <text transform="translate(2082 916) rotate(86)" textLength="76">R. do Sol</text>
            <text transform="translate(2127 1047) rotate(-73)" textLength="97">Rua da Lua</text>
            <text transform="translate(2020 1110) rotate(-69)" textLength="115">R. das Flores</text>
            <text transform="translate(2257 1050) rotate(28)" textLength="86">R. Peroba</text>
            <text transform="translate(2303 1169) rotate(28)" textLength="94">R. Graviola</text>
            <text transform="translate(2282 1182) rotate(28)" textLength="104">R. Castanha</text>
            <text transform="translate(2271 1202) rotate(28)" textLength="100">R. Cupuaçu</text>
            <text transform="translate(2211 1196) rotate(25)" textLength="64">R. Açaí</text>
            <text transform="translate(2200 1226) rotate(27)" textLength="76">R. Frutal</text>
            <text transform="translate(1987 1312) rotate(-2)" textLength="93">R. Fortuna</text>
            <text transform="translate(1994 1408) rotate(-62)" textLength="88">R. Paraná</text>
            <text transform="translate(2150 1397) rotate(42)" textLength="102">R. Alvorada</text>
            <text transform="translate(2596 1252) rotate(27)" textLength="88">R. Peroba</text>
            <text transform="translate(2526 1374) rotate(25)">R. Açaí</text>
            <text transform="translate(2552 1430) rotate(25)">R. Or</text>
            <text transform="translate(2664 1434) rotate(-66)">R. Ac</text>
            <text transform="translate(2620 1462) rotate(27)">quídeas</text>
            <text transform="translate(2625 998) rotate(27)">R. Suriname</text>
            <text transform="translate(2330 1510) rotate(-66)">ova</text>
          </g>
          <g class="lbl avenue">
            <text transform="translate(1718 645) rotate(-12.700)" textLength="154">Av. Amazonas</text>
            <text transform="translate(1280 773) rotate(78.200)" textLength="190">Av. Campos Sales</text>
            <text transform="translate(1334 785) rotate(78)" textLength="199">R. Tenreiro Aranha</text>
            <text transform="translate(2088 1458) rotate(-61)" textLength="154">R. Três e Meio</text>
            <text transform="translate(2533 1339) rotate(-61)" textLength="150">Av. Jatuarana</text>
          </g>
          <g class="lbl area">
            <text x="1340" y="684" textLength="184">SANTA BÁRBARA</text><text x="1647" y="637" textLength="51">KM 1</text><text x="1204" y="759" textLength="79">CAMBO</text>
            <text x="1593" y="874" textLength="160">MATO GROSSO</text><text x="1912" y="854" textLength="73">ROQUE</text><text x="1363" y="1013" textLength="69">AREAL</text>
            <text x="1542" y="1117" textLength="101" class="big">ROQUE</text><text x="1427" y="1273" textLength="149">TUCUMANZAL</text><text x="1635" y="1353" textLength="110">SÃO JOÃO</text>
            <text x="1644" y="1373" textLength="94">BATISTA</text><text x="1270" y="1407" textLength="50">TUPI</text><text x="2297" y="1302" textLength="110">FLORESTA</text>
            <text x="1741" y="518" textLength="139">DAS GRAÇAS</text><text x="2222" y="521" textLength="142">NOVA PORTO</text><text x="2257" y="541" textLength="72">VELHO</text>
            <text x="1333" y="517" textLength="208" class="city">Porto Velho</text>
          </g>
          <g class="lbl poi">
            <g fill="#1a73e8"><text x="1785" y="576" textLength="311">Arasuper - Jorge Teixeira</text><text x="2157" y="912" textLength="156" class="m">Havan Porto</text><text x="2106" y="940" textLength="207" class="m">Velho II - BR 364</text><text x="1607" y="1203" textLength="152">Fertubos BR</text><text x="2634" y="1333">Arara</text></g>
            <g fill="#5a7684"><text x="1470" y="778" textLength="83" class="m">Centro</text><text x="1433" y="806" textLength="158" class="m">Universitário</text><text x="1447" y="834" textLength="130" class="m">São Lucas</text>
            <text x="1780" y="885" textLength="129">São Lucas</text><text x="1780" y="913" textLength="152">Educacional</text><text x="1780" y="941" textLength="126">Campus 2</text>
            <text x="2098" y="625" textLength="300">Associação Beneficente</text><text x="2195" y="653" textLength="204">Zequinha Araujo</text>
            <text x="1212" y="1120" textLength="134">e Saúde da</text><text x="1217" y="1148" textLength="130">aldo Piana</text>
            <text x="2006" y="1165" textLength="142">UNISP Sul -</text><text x="1870" y="1193" textLength="283">Unidade Integrada de…</text><text x="2510" y="1089" textLength="113">SINTERO</text>
            <text x="2289" y="1428" textLength="202">EEEM Prof Joao</text><text x="2298" y="1456" textLength="193">Bento Da Costa</text><text x="2663" y="786">E</text><text x="2663" y="813">C</text></g>
            <g fill="#d56e0c"><text x="2436" y="542" textLength="243">Delícias do Madeira</text><text x="2436" y="570" textLength="132">- Unidade I</text></g>
            <g fill="#e91e63"><text x="1960" y="740" textLength="154">Hotel Caribe</text><text x="2562" y="1179">Z</text><text x="2640" y="1179">pa</text></g>
            <g fill="#188038"><text x="2369" y="723" textLength="81" class="m">Bluefit</text><text x="1219" y="1215" textLength="208">Hulk's Academia</text><text x="1712" y="1523">ARENA ROMANI</text></g>
            <text x="1214" y="1261" textLength="162" fill="#e0282d">ão Pellegrino</text>
            <text x="1234" y="1450" textLength="257" fill="#5c6bc0">Posto do Garimpeiro</text>
          </g>
          <g>
            <g transform="translate(1512 900)" fill="#78909c"><use href="#pin"/><use href="#g-school"/></g>
            <g transform="translate(1826 855)" fill="#78909c"><use href="#pin"/><use href="#g-school"/></g>
            <g transform="translate(2516 1459)" fill="#78909c"><use href="#pin"/><use href="#g-school"/></g>
            <g transform="translate(1373 1151)" fill="#78909c"><use href="#pin"/><use href="#g-bank"/></g>
            <g transform="translate(2178 1197)" fill="#78909c"><use href="#pin"/><use href="#g-bank"/></g>
            <g transform="translate(2424 657)" fill="#78909c"><use href="#pin"/><use href="#g-dot"/></g>
            <g transform="translate(2648 1107)" fill="#78909c"><use href="#pin"/><use href="#g-dot"/></g>
            <g transform="translate(2474 741)" fill="#34a853"><use href="#pin"/><use href="#g-dot"/></g>
            <g transform="translate(1453 1233)" fill="#34a853"><use href="#pin"/><use href="#g-dot"/></g>
            <g transform="translate(2051 642)" fill="#5491f5"><use href="#pin"/><use href="#g-cart"/></g>
            <g transform="translate(2611 792)" fill="#5491f5"><use href="#pin"/><use href="#g-cart"/></g>
            <g transform="translate(2338 944)" fill="#5491f5"><use href="#pin"/><use href="#g-bag"/></g>
            <g transform="translate(1784 1221)" fill="#5491f5"><use href="#pin"/><use href="#g-bag"/></g>
            <g transform="translate(2411 574)" fill="#f09300"><use href="#pin"/><use href="#g-food"/></g>
            <g transform="translate(1525 1246)" fill="#f09300"><use href="#pin"/><use href="#g-food"/></g>
            <g transform="translate(2139 758)" fill="#f06292"><use href="#pin"/><use href="#g-bed"/></g>
            <g transform="translate(1445 1420)" fill="#7986cb"><use href="#pin"/><use href="#g-fuel"/></g>
            <circle cx="1941" cy="1505" r="20" fill="#34a853"/>
            <path d="M1329 612h10l-5 11z" fill="#f4447e"/>
          </g>
          <g class="shields">
            <use href="#shield" x="2243" y="852"/><text x="2243" y="859">312</text><use href="#shield" x="2069" y="866"/><text x="2069" y="873">319</text><use href="#shield" x="2002" y="880"/><text x="2002" y="887">312</text><use href="#shield" x="1504" y="1016"/><text x="1504" y="1023">312</text><use href="#shield" x="2502" y="1114"/><text x="2502" y="1121">364</text>
          </g>
          <path d="M1944 1014C1940 997 1918 986 1918 966A26 26 0 0 1 1970 966C1970 986 1948 997 1944 1014z" fill="#ea4335" stroke="#c5221f" stroke-width="2"/><circle cx="1944" cy="967" r="10" fill="#b31412"/>
          <text class="google" x="1236" y="1499" textLength="111"><tspan fill="#4285f4">G</tspan><tspan fill="#ea4335">o</tspan><tspan fill="#fbbc04">o</tspan><tspan fill="#4285f4">g</tspan><tspan fill="#34a853">l</tspan><tspan fill="#ea4335">e</tspan></text>
        </svg>
        <div class="maptype"><b>Mapa</b><span>Satélite</span></div>
        <div class="ctl full"><svg width="36" height="36" viewBox="0 0 36 36"><path d="M2.500 11V2.500H11M25 2.500h8.500V11M33.500 25v8.500H25M11 33.500H2.500V25" fill="none" stroke="#666" stroke-width="5"/></svg></div>
        <div class="ctl peg"><svg width="36" height="62" viewBox="0 0 36 62"><path d="M10 20h16q3 0 4 4l4 17-5 2-4-9-1 26h-5l-1-16-1 16h-5L11 34l-4 9-5-2 4-17q1-4 4-4z" fill="#fbbc2c" stroke="#8a8a8a" stroke-width="1.500"/><circle cx="18" cy="11" r="10.500" fill="#fbb829" stroke="#8a8a8a" stroke-width="1.500"/><path d="M12 21h12l-6 10z" fill="#e07f1f"/></svg></div>
        <div class="ctl zoom"><svg width="36" height="36" viewBox="0 0 36 36"><path d="M18 0v36M0 18h36" stroke="#666" stroke-width="8"/></svg><hr><svg width="36" height="36" viewBox="0 0 36 36"><path d="M0 18h36" stroke="#666" stroke-width="8"/></svg></div>
        <div class="legal"><span>Atalhos do teclado</span><span>Dados cartográficos ©2022</span><span>Termos de Uso</span><span>Informar erro no mapa</span></div>
      </div>
      <div class="group address"><span class="field">BR-364, 620 - Floresta, Porto Velho - RO, 76806-480, Brazil</span><span class="copy"><svg><use href="#i-copy"/></svg></span></div>
    </section>
  </div>
</main>
</body>
</html>
```
FILE: styles.css
```css
* { box-sizing: border-box; }
body { margin: 0; padding: 76px 112px; width: 2810px; height: 1866px; overflow: hidden; background: #fff; font-family: Inter, "Liberation Sans", sans-serif; color: #212529; font-size: 32px; }
svg { display: block; flex: none; }
.sprite { position: absolute; width: 0; height: 0; }
.hair { vector-effect: non-scaling-stroke; }
.window { position: relative; width: 2586px; height: 1642px; background: #fff; border-radius: 20px; box-shadow: 0 0 0 1px rgba(0,0,0,.25), 0 36px 80px rgba(0,0,0,.4); overflow: hidden; }

/* browser chrome */
.theme { position: absolute; left: 0; top: 0; width: 2586px; height: 160px; }
.lines-dark { fill: none; stroke: #3c5047; stroke-width: 2; }
.lines-green { fill: none; stroke: #d3e88f; stroke-opacity: .36; stroke-width: 2; }
.droid { fill: none; }
.tabstrip { position: relative; display: flex; align-items: center; height: 86px; padding: 18px 16px 0 42px; }
.light { width: 24px; height: 24px; border-radius: 50%; margin: -16px 16px 0 0; }
.red { background: #ff5f57; }
.amber { background: #febc2e; }
.green { background: #28c840; }
.tab { display: flex; align-items: center; width: 480px; margin-left: 24px; padding: 0 23px 0 24px; font-size: 24px; line-height: 30px; color: #111; }
.fav { width: 32px; height: 32px; margin-right: 16px; }
.tab-title { flex: 1; margin-top: -1px; }
.x { width: 18px; height: 18px; }
.round { display: flex; align-items: center; justify-content: center; width: 56px; height: 56px; border-radius: 50%; background: #111214; }
.plus { margin-left: 16px; }
.chev { margin-left: auto; }
.toolbar { position: relative; display: flex; align-items: center; height: 74px; padding-left: 28px; }
.nav { width: 32px; height: 32px; margin-right: 32px; fill: none; stroke: #5f6368; stroke-width: 3; }
.dim { opacity: .5; }
.omnibox { display: flex; align-items: center; width: 1450px; height: 56px; margin: -2px 12px 0 -4px; padding: 0 20px 0 27px; border-radius: 28px; background: #e5f0c9; }
.lock { width: 18px; height: 24px; margin-right: 23px; }
.url { flex: 1; font-size: 28px; letter-spacing: .1px; color: #202124; }
.star { margin-right: 0; }
.exts { display: flex; }
.ext { width: 64px; height: 74px; margin-top: -1px; }
.badge { font: 500 18px Inter, sans-serif; fill: #fff; text-anchor: middle; }

/* page header */
.site { display: flex; align-items: center; justify-content: space-between; height: 150px; padding: 21px 25px 53px; }
.brand { display: flex; align-items: center; font-size: 38px; letter-spacing: -.95px; line-height: 46px; }
.brand span { margin-top: -2px; }
.logo { width: 60px; height: 60px; margin: 3px 9px 0 -1px; }
.brand-tld { color: #6c757d; font-weight: 300; }
.about { width: 139px; height: 76px; line-height: 78px; text-align: center; background: #f8f9fa; border-radius: 12px; color: #000; letter-spacing: -.7px; }

.columns { display: grid; grid-template-columns: 1030px 1460px; column-gap: 48px; align-items: start; padding: 0 24px; letter-spacing: -.45px; }
.card { border: 2px solid #d2d3d4; border-radius: 10px; background: #fff; }
.form { height: 690px; padding: 32px; }
.pair { display: grid; grid-template-columns: 457px 457px; justify-content: space-between; }
label { display: block; height: 48px; line-height: 50px; }
.muted { color: #6c757d; font-weight: 300; }
.gap { margin-top: 32px; }
.group { display: flex; height: 76px; line-height: 74px; }
.field { flex: 1; border: 2px solid #ced4da; border-right: 0; border-radius: 8px 0 0 8px; padding-left: 24px; white-space: nowrap; overflow: hidden; }
.mid { border-radius: 0; border-left: 0; }
.endcap { border-right: 2px solid #ced4da; border-radius: 0 8px 8px 0; }
.copy { width: 80px; display: flex; align-items: center; justify-content: center; border: 2px solid #6c757d; border-radius: 0 8px 8px 0; color: #6c757d; }
.copy svg { width: 28px; height: 32px; }
.addon { background: #e9ecef; border: 2px solid #ced4da; border-radius: 8px 0 0 8px; text-align: center; }
.geo { width: 181px; letter-spacing: -.8px; }
.geo a { color: #0d6efd; text-decoration: underline; text-decoration-thickness: 3px; text-underline-offset: 4px; }
.fmt { width: 155px; }
.drop { display: flex; align-items: center; background: #6c757d; color: #fff; padding-left: 26px; width: 221px; letter-spacing: -.9px; }
.drop + .copy { border-left: 0; width: 78px; }
.last { width: 207px; border-radius: 0 8px 8px 0; letter-spacing: -.7px; }
.drop i { border: 10px solid transparent; border-top-color: #fff; border-bottom: 0; margin: -4px 0 0 17px; }
.actions { display: flex; height: 62px; }
.btn { display: flex; align-items: center; justify-content: center; height: 62px; border: 2px solid; border-radius: 6px; font-size: 28px; letter-spacing: -.4px; white-space: nowrap; }
.btn svg { margin-right: 8px; }
.gps { width: 188px; color: #0d6efd; border-radius: 6px 0 0 6px; }
.center { width: 303px; color: #6c757d; border-left: 0; border-radius: 0 6px 6px 0; }
.favorite { width: 206px; margin-left: auto; color: #ffc107; }
.tabs { display: flex; height: 84px; margin-top: 32px; line-height: 82px; letter-spacing: -.75px; }
.on { width: 199px; padding-left: 32px; border: 2px solid #dee2e6; border-bottom: 0; border-radius: 10px 10px 0 0; color: #495057; }
.off { flex: 1; padding: 2px 0 0 34px; border-bottom: 2px solid #dee2e6; color: #0d6efd; }
.item { display: flex; align-items: center; height: 84px; margin-top: 32px; padding-left: 32px; border: 2px solid #dfdfdf; letter-spacing: -.52px; white-space: nowrap; }
.item svg { color: #dc3545; margin-right: 8px; }
.delete { width: 244px; margin: 32px auto 0; color: #dc3545; }

/* map card */
.right { height: 1302px; padding-top: 32px; }
.search, .address { margin: 0 32px; }
.address { letter-spacing: -.52px; }
.search { height: 62px; line-height: 60px; font-size: 28px; letter-spacing: -.27px; }
.search .addon { width: 83px; display: flex; align-items: center; justify-content: center; }
.search .field { padding-left: 16px; color: #6c757d; }
.map { position: relative; height: 1000px; margin: 32px 0; overflow: hidden; letter-spacing: 0; font-family: Roboto, sans-serif; }
.tiles { width: 1456px; height: 1000px; }
.lbl text { paint-order: stroke; stroke: #fff; stroke-width: 5px; stroke-linejoin: round; }
.street { font-size: 22px; fill: #6d7278; }
.avenue { font-size: 25px; fill: #4f5357; font-weight: 500; }
.area { font-size: 21px; fill: #4f5255; font-weight: 500; }
.big { font-size: 27px; }
.city { font-size: 36px; fill: #202124; font-weight: 500; }
.poi { font-size: 28px; }
.m { font-weight: 500; }
.shields { font-size: 20px; fill: #3c4043; text-anchor: middle; }
.google { font: 500 37px Lato, sans-serif; paint-order: stroke; stroke: #fff; stroke-width: 4px; }
.maptype, .ctl, .legal { position: absolute; background: #fff; }
.maptype { left: 20px; top: 20px; display: flex; width: 346px; height: 80px; line-height: 80px; font-size: 36px; text-align: center; border-radius: 4px; box-shadow: 0 2px 6px rgba(0,0,0,.25); color: #565656; }
.maptype b { width: 158px; font-weight: 500; color: #000; border-right: 2px solid #e9e9e9; }
.maptype span { flex: 1; }
.ctl { right: 20px; width: 80px; height: 80px; display: flex; flex-direction: column; align-items: center; justify-content: center; border-radius: 4px; box-shadow: 0 2px 6px rgba(0,0,0,.28); }
.full { top: 20px; }
.peg { top: 646px; }
.zoom { top: 790px; height: 162px; justify-content: space-between; padding: 22px 0; }
.zoom hr { width: 60px; margin: 0; border: 0; border-top: 2px solid #e6e6e6; }
.legal { right: 0; bottom: 0; display: flex; gap: 24px; height: 28px; line-height: 30px; padding: 0 12px 0 0; background: rgba(245,245,245,.75); font-size: 20px; color: #000; }
```
